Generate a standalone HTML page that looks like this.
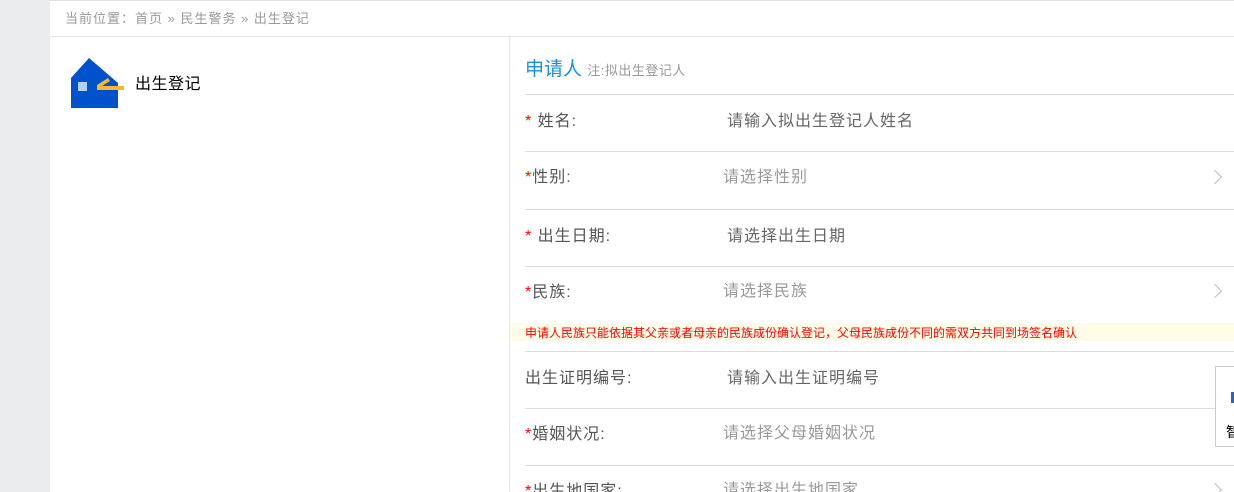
<!DOCTYPE html>
<html><head><meta charset="utf-8"><style>
html,body{margin:0;width:1234px;height:492px;overflow:hidden}
body{background:#fff;font-family:"Liberation Sans","Noto Sans CJK SC",sans-serif;position:relative}
.strip{position:absolute;left:0;top:0;width:50px;height:492px;background:#ebeced}
.topl{position:absolute;left:50px;top:0;right:0;height:1px;background:#e0e0e0}
.bc{position:absolute;left:65px;top:8px;font-size:13px;color:#999;letter-spacing:1px;white-space:nowrap}
.bcl{position:absolute;left:50px;right:0;top:36px;height:1px;background:#e5e5e5}
.vl{position:absolute;left:509px;top:37px;width:1px;bottom:0;background:#e5e5e5}
.t{position:absolute;white-space:nowrap}
.hl{position:absolute;left:525px;right:0;height:1px;background:#dcdcdc}
.lab{font-size:16px;color:#555;letter-spacing:1px}
.st{color:#f00}
.inp{font-size:16px;color:#666;letter-spacing:1px}
.sel{font-size:16px;color:#999;letter-spacing:1px}
.arr{position:absolute;left:1210px;width:9px;height:9px;border-right:1.5px solid #bbb;border-top:1.5px solid #bbb;transform:rotate(45deg)}
</style></head><body>
<div class="strip"></div><div class="topl"></div>
<div class="bc">当前位置：首页 » 民生警务 » 出生登记</div>
<div class="bcl"></div><div class="vl"></div>
<svg style="position:absolute;left:71px;top:58px" width="54" height="50" viewBox="0 0 54 50">
<polygon points="0,20 18,0 47,25 47,50 0,50" fill="#0052cc"/>
<rect x="7" y="24" width="9" height="9" fill="#b8cdf0"/>
<polygon points="26,27 37,20 39,23 31,28 53,28 53,32 26,32" fill="#f5b82e"/>
</svg>
<div class="t" style="left:135px;top:70px;font-size:16px;color:#000;letter-spacing:.5px">出生登记</div>
<div class="t" style="left:525px;top:54px;font-size:19px;color:#1a8fe0">申请人 <span style="font-size:13px;color:#999;letter-spacing:.5px">注:拟出生登记人</span></div>
<div class="hl" style="top:94px"></div>
<div class="t lab" style="left:525px;top:107px"><span class="st">*</span> 姓名:</div>
<div class="t inp" style="left:727px;top:107px">请输入拟出生登记人姓名</div>
<div class="hl" style="top:151px"></div>
<div class="t lab" style="left:525px;top:163px"><span class="st">*</span>性别:</div>
<div class="t sel" style="left:723px;top:163px">请选择性别</div>
<div class="arr" style="top:172px"></div>
<div class="hl" style="top:209px"></div>
<div class="t lab" style="left:525px;top:222px"><span class="st">*</span> 出生日期:</div>
<div class="t inp" style="left:727px;top:222px">请选择出生日期</div>
<div class="hl" style="top:266px"></div>
<div class="t lab" style="left:525px;top:278px"><span class="st">*</span>民族:</div>
<div class="t sel" style="left:723px;top:277px">请选择民族</div>
<div class="arr" style="top:286px"></div>
<div style="position:absolute;left:510px;right:0;top:323px;height:18px;background:#fffde8"></div>
<div class="t" style="left:525px;top:324px;font-size:12px;color:#f00">申请人民族只能依据其父亲或者母亲的民族成份确认登记，父母民族成份不同的需双方共同到场签名确认</div>
<div class="hl" style="top:351px"></div>
<div class="t lab" style="left:525px;top:364px">出生证明编号:</div>
<div class="t inp" style="left:727px;top:364px">请输入出生证明编号</div>
<div class="hl" style="top:408px"></div>
<div class="t lab" style="left:525px;top:420px"><span class="st">*</span>婚姻状况:</div>
<div class="t sel" style="left:723px;top:419px">请选择父母婚姻状况</div>
<div class="hl" style="top:465px"></div>
<div class="t lab" style="left:525px;top:477px"><span class="st">*</span>出生地国家:</div>
<div class="t sel" style="left:723px;top:476px">请选择出生地国家</div>
<div class="arr" style="top:485px"></div>
<div style="position:absolute;left:1215px;top:366px;width:30px;height:79px;border:1px solid #ccc;background:#fff"></div>
<div style="position:absolute;left:1231px;top:392px;width:5px;height:11px;background:#3a5fb0"></div>
<div class="t" style="left:1226px;top:422px;font-size:14px;color:#000">智</div>
</body></html>
